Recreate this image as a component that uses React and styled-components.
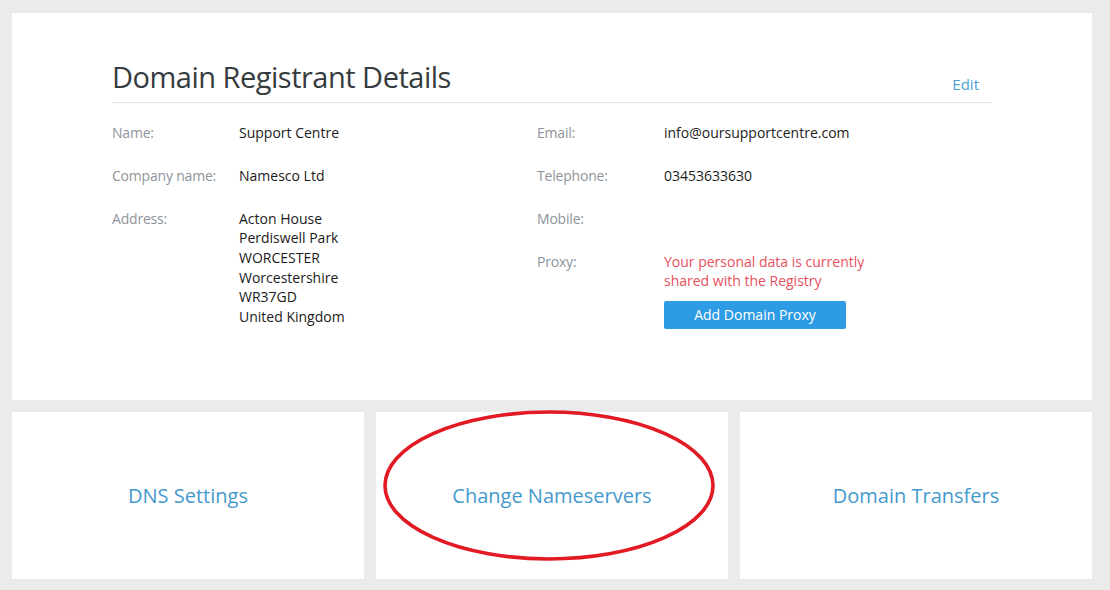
import React from 'react'
import styled, { createGlobalStyle } from 'styled-components'

const GlobalStyle = createGlobalStyle`
  html, body {
    margin: 0;
    padding: 0;
    background: #ebebeb;
  }
  body {
    font-family: 'Open Sans', 'Liberation Sans', sans-serif;
  }
`

const left = [
  { label: 'Name:', value: ['Support Centre'] },
  { label: 'Company name:', value: ['Namesco Ltd'] },
  {
    label: 'Address:',
    value: ['Acton House', 'Perdiswell Park', 'WORCESTER', 'Worcestershire', 'WR37GD', 'United Kingdom'],
  },
]

const right = [
  { label: 'Email:', value: ['info@oursupportcentre.com'] },
  { label: 'Telephone:', value: ['03453633630'] },
  { label: 'Mobile:', value: [] },
]

const App = () => {
  return (
    <Page>
      <GlobalStyle />
      <Panel>
        <Header>
          <Title>Domain Registrant Details</Title>
          <EditLink href="#">Edit</EditLink>
        </Header>
        <Columns>
          <Column>
            {left.map((row) => (
              <Row key={row.label}>
                <Label>{row.label}</Label>
                <Value>
                  {row.value.map((line) => (
                    <div key={line}>{line}</div>
                  ))}
                </Value>
              </Row>
            ))}
          </Column>
          <Column>
            {right.map((row) => (
              <Row key={row.label}>
                <Label>{row.label}</Label>
                <Value>{row.value[0] || '\u00a0'}</Value>
              </Row>
            ))}
            <Row>
              <Label>Proxy:</Label>
              <Value>
                <Warning>
                  Your personal data is currently
                  <br />
                  shared with the Registry
                </Warning>
                <ProxyButton>Add Domain Proxy</ProxyButton>
              </Value>
            </Row>
          </Column>
        </Columns>
      </Panel>

      <Cards>
        <Card>
          <CardLink href="#">DNS Settings</CardLink>
        </Card>
        <Card>
          <CardLink href="#">Change Nameservers</CardLink>
          <Circle width="334" height="153" viewBox="0 0 334 153">
            <ellipse cx="167" cy="76.5" rx="164" ry="73.5" fill="none" stroke="#e11a24" strokeWidth="3.6" />
          </Circle>
        </Card>
        <Card>
          <CardLink href="#">Domain Transfers</CardLink>
        </Card>
      </Cards>
    </Page>
  )
}

const Page = styled.div`
  padding: 13px 18px 0 12px;
  display: flex;
  flex-direction: column;
  gap: 12px;
`

const Panel = styled.section`
  background: #fff;
  height: 387px;
  padding: 0 100px;
  box-sizing: border-box;
`

const Header = styled.div`
  display: flex;
  justify-content: space-between;
  align-items: flex-end;
  padding-top: 46px;
  padding-bottom: 7px;
  border-bottom: 1px solid #e3e3e3;
`

const Title = styled.h1`
  margin: 0;
  font-size: 29px;
  line-height: 36px;
  letter-spacing: -0.5px;
  font-weight: 400;
  color: #363b40;
`

const EditLink = styled.a`
  font-size: 15px;
  line-height: 20px;
  color: #4a9fd1;
  text-decoration: none;
  margin-right: 13px;
  margin-bottom: 1px;
`

const Columns = styled.div`
  display: grid;
  grid-template-columns: 425px 1fr;
  padding-top: 20px;
`

const Column = styled.div`
  display: flex;
  flex-direction: column;
  gap: 23.3px;
`

const Row = styled.div`
  display: grid;
  grid-template-columns: 127px 1fr;
  font-size: 14px;
  line-height: 19.6px;
`

const Label = styled.div`
  color: #8d949b;
  letter-spacing: -0.2px;
`

const Value = styled.div`
  color: #1b1b1b;
`

const Warning = styled.div`
  color: #e6505c;
`

const ProxyButton = styled.button`
  margin-top: 10px;
  width: 182px;
  height: 28px;
  border: none;
  border-radius: 2px;
  background: #2e9be5;
  color: #fff;
  font-family: 'Open Sans', 'Liberation Sans', sans-serif;
  font-size: 14px;
  padding: 0;
`

const Cards = styled.div`
  display: grid;
  grid-template-columns: repeat(3, 1fr);
  gap: 12px;
`

const Card = styled.div`
  position: relative;
  background: #fff;
  height: 167px;
  display: flex;
  align-items: center;
  justify-content: center;
`

const CardLink = styled.a`
  font-size: 20px;
  color: #4599cd;
  text-decoration: none;
`

const Circle = styled.svg`
  position: absolute;
  left: 6px;
  top: -3px;
  pointer-events: none;
`

export default App
